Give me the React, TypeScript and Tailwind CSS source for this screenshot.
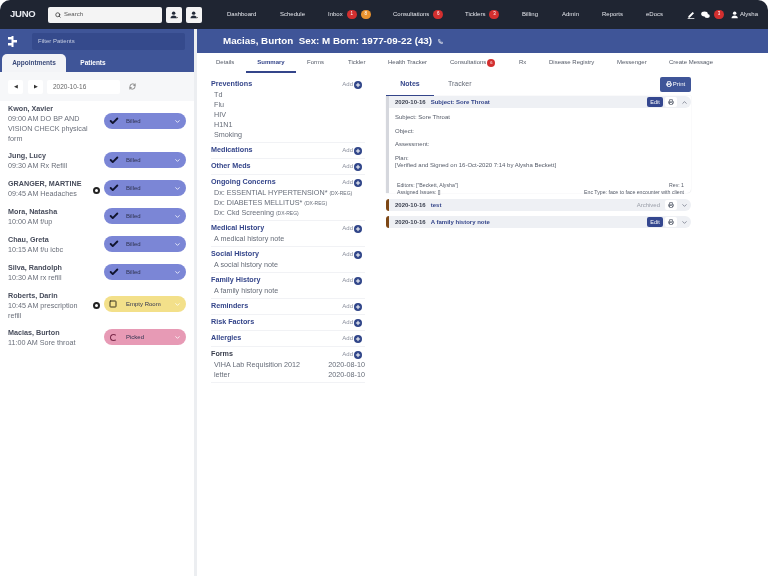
import React from "react";
import { Search, Phone, RefreshCw, Printer, ChevronDown, ChevronUp, Check, Plus, Square } from "lucide-react";

const nav: [string, string, string?, string?][] = [
  ["Dashboard", "w-[53px]"], ["Schedule", "w-[48px]"], ["Inbox", "w-[65px]", "1", "8"], ["Consultations", "w-[72px]", "6"], ["Ticklers", "w-[57px]", "3"], ["Billing", "w-[40px]"], ["Admin", "w-[40px]"], ["Reports", "w-[44px]"], ["eDocs", "w-[41px]"],
];

function Badge({ n, c = "bg-[#d32f2f]" }: { n: string; c?: string }) {
  return <span className={`ml-[4px] inline-flex h-[9px] w-[10px] shrink-0 items-center justify-center rounded-full text-[4.5px] text-white ${c}`}>{n}</span>;
}

function PersonIcon({ size, tag }: { size: number; tag?: boolean }) {
  return (
    <svg width={size} height={size} viewBox="0 0 12 12" fill="currentColor" className="shrink-0">
      <circle cx="5.5" cy="3.2" r="2.6" />
      <path d="M0.8 11c0-3 2-4.3 4.7-4.3S10.2 8 10.2 11z" />
      {tag && <rect x="9" y="9" width="3" height="1.6" fill="#777" />}
    </svg>
  );
}

type Appt = { name: string; lines: string[]; status: "Billed" | "Empty Room" | "Picked"; dot?: string; h: string; off: string };
const appts: Appt[] = [
  { name: "Kwon, Xavier", lines: ["09:00 AM DO BP AND", "VISION CHECK physical", "form"], status: "Billed", h: "h-[47px]", off: "pt-[9px]" },
  { name: "Jung, Lucy", lines: ["09:30 AM Rx Refill"], status: "Billed", h: "h-[28px]", off: "pt-[1px]" },
  { name: "GRANGER, MARTINE", lines: ["09:45 AM Headaches"], status: "Billed", dot: "pt-[8px]", h: "h-[28px]", off: "pt-[1px]" },
  { name: "Mora, Natasha", lines: ["10:00 AM f/up"], status: "Billed", h: "h-[28px]", off: "pt-[1px]" },
  { name: "Chau, Greta", lines: ["10:15 AM f/u icbc"], status: "Billed", h: "h-[28px]", off: "pt-[1px]" },
  { name: "Silva, Randolph", lines: ["10:30 AM rx refill"], status: "Billed", h: "h-[28px]", off: "pt-[1px]" },
  { name: "Roberts, Darin", lines: ["10:45 AM prescription", "refill"], status: "Empty Room", dot: "pt-[11px]", h: "h-[37px]", off: "pt-[5px]" },
  { name: "Macias, Burton", lines: ["11:00 AM Sore throat"], status: "Picked", h: "h-[28px]", off: "pt-[1px]" },
];

function Pill({ status }: { status: Appt["status"] }) {
  const bg = status === "Billed" ? "bg-[#7b86d6]" : status === "Empty Room" ? "bg-[#f3e08a]" : "bg-[#e79ab5]";
  return (
    <div className={`flex h-[16px] w-[82px] items-center rounded-full pl-[5px] pr-[5px] ${bg}`}>
      <span className="flex w-[17px] items-center">
        {status === "Billed" && <Check size={10} strokeWidth={4.5} className="text-[#10142e]" />}
        {status === "Empty Room" && <Square size={8} strokeWidth={3} className="text-[#3a3520]" />}
        {status === "Picked" && <span className="ml-[1px] h-[7px] w-[7px] rounded-full border-[1.5px] border-[#7a2a4a] border-r-transparent" />}
      </span>
      <span className="flex-1 text-[6px] font-medium leading-none text-[#2f3350]">{status}</span>
      <ChevronDown size={7} strokeWidth={3} className="text-white opacity-90" />
    </div>
  );
}

function Add() {
  return (
    <span className="flex items-center gap-[1px] text-[6px] text-[#8a8f9c]">
      Add
      <span className="flex h-[8px] w-[8px] items-center justify-center rounded-full bg-[#2f4488]">
        <Plus size={6} strokeWidth={4} className="text-white" />
      </span>
    </span>
  );
}

function Sec({ title, children, dark }: { title: string; children?: React.ReactNode; dark?: boolean }) {
  return (
    <div className="border-b border-[#f1f2f5] pb-[2px] pt-[2px]">
      <div className="flex h-[11px] items-center justify-between pr-[3px]">
        <span className={`text-[7.2px] font-bold ${dark ? "text-[#3a3f4e]" : "text-[#34458a]"}`}>{title}</span>
        <Add />
      </div>
      {children && <div className="pl-[3px] text-[7.2px] leading-[10px] text-[#666c78]">{children}</div>}
    </div>
  );
}

function IconBtn({ children }: { children: React.ReactNode }) {
  return <span className="flex h-[10px] w-[12px] items-center justify-center rounded-[2px] bg-white text-[#4a5160]">{children}</span>;
}

function NoteBar({ title, edit, archived, open }: { title: string; edit?: boolean; archived?: boolean; open?: boolean }) {
  return (
    <div className="flex h-[12px] items-center rounded-r-[6px] bg-[#eef0f4] pl-[6px] pr-[1px]">
      <span className="text-[6px] font-bold text-[#3a3f4e]">2020-10-16</span>
      <span className="ml-[5px] text-[6px] font-bold text-[#34458a]">{title}</span>
      <span className="flex-1" />
      {archived && <span className="mr-[5px] text-[6px] text-[#9a9ea8]">Archived</span>}
      {edit && <span className="mr-[2px] flex h-[10px] w-[16px] items-center justify-center rounded-[2px] bg-[#34478f] text-[5.5px] font-medium text-white">Edit</span>}
      <IconBtn><Printer size={6} strokeWidth={2.5} /></IconBtn>
      <span className="ml-[2px] flex w-[11px] justify-center text-[#6a7080]">
        {open ? <ChevronUp size={7} strokeWidth={2.5} /> : <ChevronDown size={7} strokeWidth={2.5} />}
      </span>
    </div>
  );
}

export default function App() {
  return (
    <div className="flex h-[576px] w-[768px] flex-col overflow-hidden bg-white font-['Liberation_Sans',sans-serif] blur-[0.3px]">
      <header className="flex h-[29px] shrink-0 items-center rounded-t-[10px] bg-[#1f2532] text-white">
        <span className="ml-[10px] w-[38px] shrink-0 text-[9.5px] font-bold tracking-tight text-[#e8eaf0]">JUNO</span>
        <div className="flex h-[16px] w-[114px] shrink-0 items-center rounded-[2px] bg-[#f4f4f4] pl-[7px] text-[6px] text-[#555]">
          <Search size={6} strokeWidth={3} className="mr-[3px] text-[#333]" />Search
        </div>
        <span className="ml-[4px] flex h-[16px] w-[16px] shrink-0 items-center justify-center rounded-[2px] bg-[#f4f4f4] text-[#222a38]"><PersonIcon size={8} tag /></span>
        <span className="ml-[4px] flex h-[16px] w-[16px] shrink-0 items-center justify-center rounded-[2px] bg-[#f4f4f4] text-[#222a38]"><PersonIcon size={8} tag /></span>
        <nav className="ml-[25px] flex shrink-0 items-center text-[6px] font-medium text-[#e4e6ec]">
          {nav.map(([t, w, a, b]) => (
            <span key={t} className={`flex items-center ${w}`}>
              {t}
              {a && <Badge n={a} />}
              {b && <Badge n={b} c="bg-[#e8922e]" />}
            </span>
          ))}
        </nav>
        <svg width="8" height="8" viewBox="0 0 12 12" fill="#fff" className="shrink-0">
          <path d="M8.5 1.5l2 2L4 10H2V8zM1 11h10v1H1z" />
        </svg>
        <svg width="9" height="8" viewBox="0 0 13 12" fill="#fff" className="ml-[6px] shrink-0">
          <ellipse cx="5" cy="4.5" rx="5" ry="3.7" />
          <ellipse cx="9" cy="7.5" rx="4" ry="3" />
        </svg>
        <Badge n="3" c="ml-[1px] bg-[#d32f2f]" />
        <span className="ml-[7px] text-white"><PersonIcon size={8} /></span>
        <span className="ml-[1px] text-[6px] text-[#e4e6ec]">Alysha</span>
      </header>
      <div className="flex min-h-0 flex-1">
        <aside className="flex w-[197px] shrink-0 flex-col border-r-[3px] border-[#eceef1]">
          <div className="h-[72px] shrink-0 bg-[#3f5598]">
            <div className="flex h-[24px] items-center">
              <span className="flex w-[32px] justify-center pr-[8px]">
                <svg width="9" height="11" viewBox="0 0 9 11" fill="#fff">
                  <rect x="3.5" y="0" width="2" height="11" />
                  <rect x="0" y="1" width="4" height="2.5" />
                  <rect x="5" y="4" width="4" height="2.5" />
                  <rect x="0" y="7" width="4" height="2.5" />
                </svg>
              </span>
              <div className="flex h-[17px] w-[153px] items-center rounded-[2px] bg-[#354a8c] pl-[6px] text-[6px] text-[#c5cde2]">Filter Patients</div>
            </div>
            <div className="flex h-[19px] items-end pl-[2px]">
              <span className="flex h-[18px] w-[64px] items-center justify-center rounded-t-[5px] bg-[#f3f4f7] text-[6.5px] font-bold text-[#3a4a7a]">Appointments</span>
              <span className="flex h-[18px] w-[54px] items-center justify-center text-[6.5px] font-bold text-white">Patients</span>
            </div>
            <div className="flex h-[29px] items-center bg-[#f6f7f9] pl-[8px]">
              <span className="flex h-[14px] w-[15px] items-center justify-center rounded-[2px] bg-white text-[5px] text-[#333]">◀</span>
              <span className="ml-[5px] flex h-[14px] w-[15px] items-center justify-center rounded-[2px] bg-white text-[5px] text-[#333]">▶</span>
              <span className="ml-[4px] flex h-[14px] w-[73px] items-center rounded-[2px] bg-white pl-[6px] text-[6.5px] text-[#666]">2020-10-16</span>
              <RefreshCw size={7} strokeWidth={2.5} className="ml-[9px] text-[#666]" />
            </div>
          </div>
          <div className="flex flex-col pl-[8px] pt-[3px]">
            {appts.map((a) => (
              <div key={a.name} className={`flex ${a.h} items-start`}>
                <div className="w-[85px] shrink-0">
                  <div className="whitespace-nowrap text-[7.2px] font-bold leading-[10px] text-[#474c5b]">{a.name}</div>
                  {a.lines.map((l) => (
                    <div key={l} className="whitespace-nowrap text-[7.2px] leading-[10px] text-[#6a6f7a]">{l}</div>
                  ))}
                </div>
                <div className={`w-[11px] shrink-0 ${a.dot ?? ""}`}>
                  {a.dot && <div className="h-[7px] w-[7px] rounded-full border-2 border-[#222]" />}
                </div>
                <div className={a.off}><Pill status={a.status} /></div>
              </div>
            ))}
          </div>
        </aside>
        <main className="flex min-w-0 flex-1 flex-col">
          <div className="flex h-[24px] shrink-0 items-center bg-[#3f5598] pl-[26px] text-[9.8px] font-bold text-white">
            <span className="whitespace-pre">Macias, Burton  Sex: M Born: 1977-09-22 (43)</span>
            <Phone size={5} strokeWidth={3} className="ml-[6px] text-white" />
          </div>
          <div className="flex h-[19px] shrink-0 items-center text-[6px] text-[#555b68]">
            <span className="ml-[19px] w-[30px]">Details</span>
            <span className="relative flex h-full w-[50px] items-center justify-center font-bold text-[#34458a]">Summary<span className="absolute bottom-[-1px] left-0 right-0 h-[2px] bg-[#34458a]" /></span>
            <span className="ml-[11px] w-[41px]">Forms</span>
            <span className="w-[40px]">Tickler</span>
            <span className="w-[62px]">Health Tracker</span>
            <span className="flex w-[69px] items-center">Consultations<span className="ml-[1px] flex h-[8px] w-[8px] items-center justify-center rounded-full bg-[#d32f2f] text-[4px] text-white">6</span></span>
            <span className="w-[30px]">Rx</span>
            <span className="w-[68px]">Disease Registry</span>
            <span className="w-[52px]">Messenger</span>
            <span>Create Message</span>
          </div>
          <div className="flex min-h-0 flex-1">
            <section className="ml-[14px] w-[154px] shrink-0 pt-[5px]">
              <Sec title="Preventions"><div>Td</div><div>Flu</div><div>HIV</div><div>H1N1</div><div>Smoking</div></Sec>
              <Sec title="Medications" />
              <Sec title="Other Meds" />
              <Sec title="Ongoing Concerns">
                <div>Dx: ESSENTIAL HYPERTENSION* <span className="text-[5px]">(DX-REG)</span></div>
                <div>Dx: DIABETES MELLITUS* <span className="text-[5px]">(DX-REG)</span></div>
                <div>Dx: Ckd Screening <span className="text-[5px]">(DX-REG)</span></div>
              </Sec>
              <Sec title="Medical History"><div>A medical history note</div></Sec>
              <Sec title="Social History"><div>A social history note</div></Sec>
              <Sec title="Family History"><div>A family history note</div></Sec>
              <Sec title="Reminders" />
              <Sec title="Risk Factors" />
              <Sec title="Allergies" />
              <Sec title="Forms" dark>
                <div className="flex justify-between"><span>VIHA Lab Requisition 2012</span><span>2020-08-10</span></div>
                <div className="flex justify-between"><span>letter</span><span>2020-08-10</span></div>
              </Sec>
            </section>
            <section className="ml-[21px] w-[305px] shrink-0">
              <div className="flex h-[24px] items-center">
                <span className="relative flex h-full w-[48px] items-center justify-center text-[7px] font-bold text-[#34458a]">Notes<span className="absolute bottom-0 left-0 right-0 h-[1.5px] bg-[#34458a]" /></span>
                <span className="ml-[14px] text-[7px] text-[#666c78]">Tracker</span>
                <span className="flex-1" />
                <span className="flex h-[15px] w-[31px] items-center justify-center gap-[1px] rounded-[2px] bg-[#3f5598] text-[6px] font-medium text-white"><Printer size={6} strokeWidth={3} />Print</span>
              </div>
              <div className="flex flex-col">
                <div className="rounded-br-[4px] border-l-[3px] border-[#d5d7dd] shadow-[0_0_1px_#c9ccd3]">
                  <NoteBar title="Subject: Sore Throat" edit open />
                  <div className="h-[85px] pl-[6px] pr-[7px] pt-[3px] text-[6px] leading-[7.5px] text-[#555b68]">
                    <div className="mt-[3px]">Subject: Sore Throat</div>
                    <div className="mt-[6px]">Object:</div>
                    <div className="mt-[6px]">Assessment:</div>
                    <div className="mt-[6px]">Plan:</div>
                    <div>[Verified and Signed on 16-Oct-2020 7:14 by Alysha Beckett]</div>
                    <div className="mt-[12px] flex justify-between pl-[2px] text-[5.2px] leading-[7px]"><span>Editors: ["Beckett, Alysha"]</span><span>Rev: 1</span></div>
                    <div className="flex justify-between pl-[2px] text-[5.2px] leading-[7px]"><span>Assigned Issues: []</span><span>Enc Type: face to face encounter with client</span></div>
                  </div>
                </div>
                <div className="mt-[6px] rounded-l-[3px] border-l-[3px] border-[#7d4715]"><NoteBar title="test" archived /></div>
                <div className="mt-[5px] rounded-l-[3px] border-l-[3px] border-[#7d4715]"><NoteBar title="A family history note" edit /></div>
              </div>
            </section>
          </div>
        </main>
      </div>
    </div>
  );
}
